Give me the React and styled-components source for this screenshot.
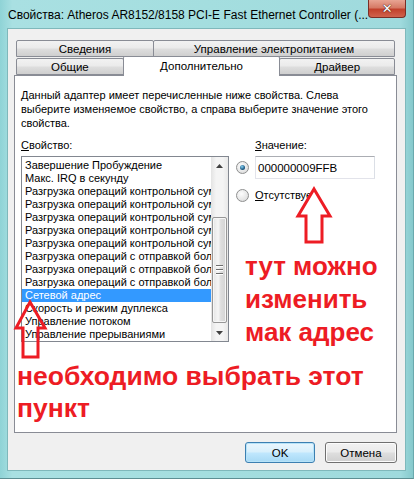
import React from "react";
import styled, { createGlobalStyle } from "styled-components";

const Global = createGlobalStyle`
  html, body { margin: 0; padding: 0; }
  body {
    width: 414px; height: 479px; overflow: hidden;
    font-family: "Liberation Sans", Arial, sans-serif;
    font-size: 11px; color: #000;
  }
`;

const Window = styled.div`
  position: relative;
  width: 414px;
  height: 479px;
  box-sizing: border-box;
  display: flex;
  flex-direction: column;
  padding: 0 7px 7px 7px;
  background: linear-gradient(90deg, #8fd3d6 0%, #a9e0e2 3%, #a4dedf 50%, #9fdadd 97%, #86c9cc 100%);
  border-right: 1px solid #6aa9ad;
  border-bottom: 1px solid #5d8f93;
`;

const TitleBar = styled.div`
  height: 28px;
  display: flex;
  align-items: flex-start;
  justify-content: space-between;
  flex: none;
`;

const Title = styled.div`
  padding-top: 8px;
  padding-left: 1px;
  font-size: 12px;
  white-space: nowrap;
  color: #000;
`;

const CloseBtn = styled.div`
  width: 46px;
  height: 18px;
  box-sizing: border-box;
  border: 1px solid #7a2e26;
  border-top: none;
  border-radius: 0 0 4px 4px;
  background: linear-gradient(180deg, #e8a493 0%, #d67a66 45%, #c2412c 55%, #d0634d 100%);
  display: flex;
  align-items: center;
  justify-content: center;
  color: #fff;
  font-weight: bold;
  font-size: 13px;
  font-family: "DejaVu Sans", sans-serif;
  text-shadow: 0 0 1px #3a1510, 0 0 1px #3a1510;
`;

const Client = styled.div`
  flex: 1;
  display: flex;
  flex-direction: column;
  background: #f0f0f0;
  border: 1px solid #7fb8bb;
  box-sizing: border-box;
  padding: 11px 8px 7px 6px;
`;

const TabRow = styled.div`
  display: flex;
  padding: 0 2px;
  height: ${(p) => p.$h}px;
  align-items: flex-end;
  position: relative;
  z-index: ${(p) => (p.$front ? 2 : 1)};
`;

const Tab = styled.div`
  box-sizing: border-box;
  width: ${(p) => p.$w}px;
  height: ${(p) => (p.$active ? 20 : 17)}px;
  margin-bottom: ${(p) => (p.$active ? -1 : 0)}px;
  margin-left: ${(p) => (p.$overlap ? -1 : 0)}px;
  border: 1px solid #898c95;
  border-bottom: ${(p) => (p.$active ? "none" : "1px solid #898c95")};
  border-radius: 2px 2px 0 0;
  background: ${(p) =>
    p.$active
      ? "#fff"
      : "linear-gradient(180deg, #f2f2f2 0%, #ebebeb 45%, #dddddd 55%, #cfcfcf 100%)"};
  display: flex;
  justify-content: center;
  align-items: ${(p) => (p.$active ? "flex-start" : "center")};
  padding-top: ${(p) => (p.$active ? 3 : 0)}px;
  font-size: 11.5px;
  position: relative;
  z-index: ${(p) => (p.$active ? 3 : 1)};
`;

const Panel = styled.div`
  position: relative;
  z-index: 1;
  height: 358px;
  box-sizing: border-box;
  background: #fff;
  border: 1px solid #898c95;
  padding: 12px 6px 0 6px;
  display: flex;
  flex-direction: column;
`;

const Description = styled.div`
  line-height: 14px;
  width: 352px;
`;

const Columns = styled.div`
  display: flex;
  margin-top: 8px;
  gap: 7px;
`;

const LeftCol = styled.div`
  width: 208px;
  display: flex;
  flex-direction: column;
`;

const RightCol = styled.div`
  display: flex;
  flex-direction: column;
`;

const Label = styled.div`
  line-height: 14px;
  height: 14px;
  margin-bottom: 4px;
  padding-left: ${(p) => p.$indent || 0}px;
`;

const U = styled.span`
  text-decoration: underline;
`;

const ListBox = styled.div`
  box-sizing: border-box;
  height: 186px;
  border: 1px solid #828790;
  display: flex;
`;

const Items = styled.div`
  flex: 1;
  overflow: hidden;
  padding-top: 2px;
`;

const Item = styled.div`
  height: 13px;
  line-height: 13px;
  white-space: nowrap;
  overflow: hidden;
  padding-left: 3px;
  background: ${(p) => (p.$sel ? "#3399ff" : "transparent")};
  color: ${(p) => (p.$sel ? "#fff" : "#000")};
`;

const ScrollBar = styled.div`
  width: 17px;
  flex: none;
  background: linear-gradient(90deg, #e3e3e3, #f4f4f4 30%, #f4f4f4 70%, #e8e8e8);
  display: flex;
  flex-direction: column;
`;

const ScrollArrow = styled.div`
  height: 17px;
  display: flex;
  align-items: center;
  justify-content: center;
  flex: none;
`;

const Track = styled.div`
  flex: 1;
  display: flex;
  flex-direction: column;
  padding: 0 1px;
`;

const Thumb = styled.div`
  box-sizing: border-box;
  height: 106px;
  margin-top: ${(p) => p.$top}px;
  border: 1px solid #979797;
  border-radius: 2px;
  background: linear-gradient(90deg, #e4e4e4 0%, #f6f6f6 40%, #dedede 60%, #d4d4d4 100%);
  box-shadow: inset 0 0 0 1px #f6f6f6;
  display: flex;
  flex-direction: column;
  align-items: center;
  justify-content: center;
  gap: 2px;
`;

const Grip = styled.div`
  width: 7px;
  height: 1px;
  background: #6d6d6d;
  border-bottom: 1px solid #fff;
`;

const ValueRow = styled.div`
  display: flex;
  align-items: center;
  height: 23px;
  gap: 6px;
`;

const Radio = styled.div`
  width: 13px;
  height: 13px;
  box-sizing: border-box;
  border-radius: 50%;
  border: 1px solid #8e8f8f;
  background: radial-gradient(circle at 40% 35%, #fdfdfd 0%, #e6e6e6 60%, #cfcfcf 100%);
  display: flex;
  align-items: center;
  justify-content: center;
  flex: none;
  &::after {
    content: "";
    display: ${(p) => (p.$on ? "block" : "none")};
    width: 5px;
    height: 5px;
    border-radius: 50%;
    background: radial-gradient(circle at 40% 35%, #8ad3f5 0%, #1f5c86 60%, #0d3450 100%);
  }
`;

const TextInput = styled.div`
  box-sizing: border-box;
  width: 120px;
  height: 23px;
  border: 1px solid #e2e3ea;
  border-top-color: #abadb3;
  border-right-color: #dbdfe6;
  display: flex;
  align-items: center;
  padding-left: 2px;
  font-size: 11.5px;
`;

const RadioRow = styled.div`
  display: flex;
  align-items: center;
  gap: 6px;
  margin-top: 9px;
  height: 14px;
`;

const Note = styled.div`
  font-family: "Liberation Sans", Arial, sans-serif;
  font-weight: bold;
  color: #ed1c24;
  font-size: ${(p) => p.$fs}px;
  line-height: ${(p) => p.$lh}px;
  margin-top: ${(p) => p.$mt}px;
  margin-left: ${(p) => p.$ml || 0}px;
  white-space: nowrap;
`;

const ButtonRow = styled.div`
  display: flex;
  justify-content: flex-end;
  gap: 10px;
  margin-top: 9px;
`;

const Button = styled.div`
  box-sizing: border-box;
  width: ${(p) => p.$w}px;
  height: 21px;
  border-radius: 3px;
  border: 1px solid ${(p) => (p.$default ? "#3c7fb1" : "#707070")};
  background: ${(p) =>
    p.$default
      ? "linear-gradient(180deg, #eaf6fd 0%, #d9f0fc 45%, #bee6fd 55%, #a7d9f5 100%)"
      : "linear-gradient(180deg, #f2f2f2 0%, #ebebeb 45%, #dddddd 55%, #cfcfcf 100%)"};
  box-shadow: inset 0 0 0 1px ${(p) => (p.$default ? "#b7e3f8" : "#fcfcfc")};
  display: flex;
  align-items: center;
  justify-content: center;
  font-size: 11.5px;
`;

const ArrowSvg = styled.svg`
  position: absolute;
  left: 0;
  top: 0;
  width: 414px;
  height: 479px;
  pointer-events: none;
  z-index: 10;
`;

const items = [
  "Завершение Пробуждение",
  "Макс. IRQ в секунду",
  "Разгрузка операций контрольной суммы IPv4",
  "Разгрузка операций контрольной суммы TCP (IPv4)",
  "Разгрузка операций контрольной суммы TCP (IPv6)",
  "Разгрузка операций контрольной суммы UDP (IPv4)",
  "Разгрузка операций контрольной суммы UDP (IPv6)",
  "Разгрузка операций с отправкой больших пакетов v1",
  "Разгрузка операций с отправкой больших пакетов v2",
  "Разгрузка операций с отправкой больших пакетов v2 (IPv6)",
  "Сетевой адрес",
  "Скорость и режим дуплекса",
  "Управление потоком",
  "Управление прерываниями",
];

export default function App() {
  return (
    <>
      <Global />
      <Window>
        <TitleBar>
          <Title>Свойства: Atheros AR8152/8158 PCI-E Fast Ethernet Controller (...</Title>
          <CloseBtn>✕</CloseBtn>
        </TitleBar>
        <Client>
          <TabRow $h={17}>
            <Tab $w={138}>Сведения</Tab>
            <Tab $w={242} $overlap>Управление электропитанием</Tab>
          </TabRow>
          <TabRow $h={18} $front>
            <Tab $w={108}>Общие</Tab>
            <Tab $w={158} $active $overlap>Дополнительно</Tab>
            <Tab $w={116} $overlap>Драйвер</Tab>
          </TabRow>
          <Panel>
            <Description>
              Данный адаптер имеет перечисленные ниже свойства. Слева
              выберите изменяемое свойство, а справа выберите значение этого
              свойства.
            </Description>
            <Columns>
              <LeftCol>
                <Label>
                  <U>С</U>войство:
                </Label>
                <ListBox>
                  <Items>
                    {items.map((t, i) => (
                      <Item key={i} $sel={i === 10}>
                        {t}
                      </Item>
                    ))}
                  </Items>
                  <ScrollBar>
                    <ScrollArrow>
                      <svg width="7" height="4" viewBox="0 0 7 4">
                        <path d="M0 4 L3.5 0 L7 4 Z" fill="#404040" />
                      </svg>
                    </ScrollArrow>
                    <Track>
                      <Thumb $top={43}>
                        <Grip />
                        <Grip />
                        <Grip />
                      </Thumb>
                    </Track>
                    <ScrollArrow>
                      <svg width="7" height="4" viewBox="0 0 7 4">
                        <path d="M0 0 L3.5 4 L7 0 Z" fill="#404040" />
                      </svg>
                    </ScrollArrow>
                  </ScrollBar>
                </ListBox>
              </LeftCol>
              <RightCol>
                <Label $indent={19}>
                  <U>З</U>начение:
                </Label>
                <ValueRow>
                  <Radio $on />
                  <TextInput>000000009FFB</TextInput>
                </ValueRow>
                <RadioRow>
                  <Radio />
                  <span>
                    <U>О</U>тсутствует
                  </span>
                </RadioRow>
                <Note $fs={26} $lh={33} $mt={48} $ml={9}>
                  тут можно
                  <br />
                  изменить
                  <br />
                  мак адрес
                </Note>
              </RightCol>
            </Columns>
            <Note $fs={26.5} $lh={32} $mt={11} $ml={-4}>
              необходимо выбрать этот
              <br />
              пункт
            </Note>
          </Panel>
          <ButtonRow>
            <Button $w={70} $default>OK</Button>
            <Button $w={72}>Отмена</Button>
          </ButtonRow>
        </Client>
        <ArrowSvg viewBox="0 0 414 479">
          <polygon
            points="314,189 330,216 322,216 322,242 306,242 306,216 298,216"
            fill="#fff"
            stroke="#ed1c24"
            strokeWidth="3"
            strokeLinejoin="miter"
          />
          <polygon
            points="30,302 45,328 38,328 38,357 23,357 23,328 16,328"
            fill="none"
            stroke="#ed1c24"
            strokeWidth="3"
            strokeLinejoin="miter"
          />
        </ArrowSvg>
      </Window>
    </>
  );
}
